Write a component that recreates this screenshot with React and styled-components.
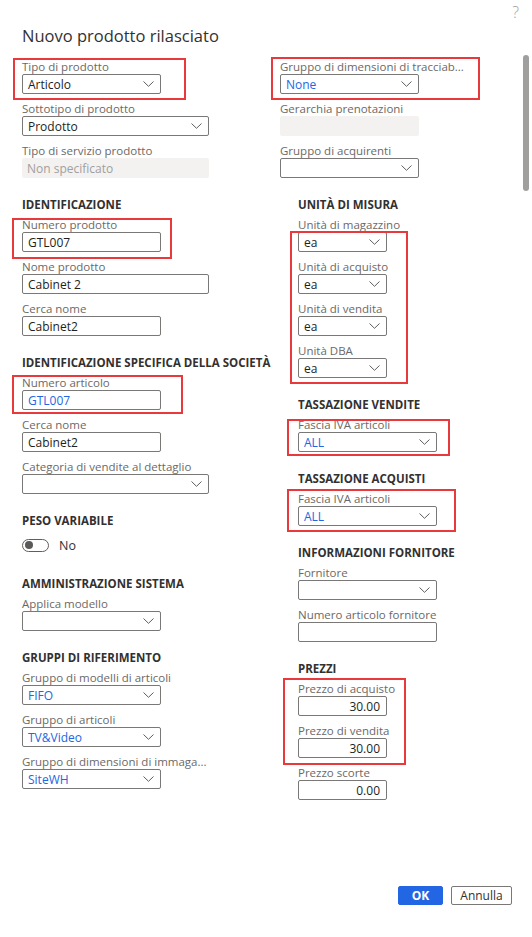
import React from 'react';
import styled, { createGlobalStyle } from 'styled-components';

const GlobalStyle = createGlobalStyle`
  html, body {
    margin: 0;
    padding: 0;
    background: #ffffff;
  }
  body {
    font-family: "Open Sans", "Noto Sans", sans-serif;
    color: #201f1e;
  }
`;

const Dialog = styled.div`
  position: relative;
  width: 532px;
  height: 937px;
  box-sizing: border-box;
  padding: 0 0 0 22px;
  overflow: hidden;
`;

const TopBar = styled.div`
  display: flex;
  justify-content: flex-end;
  height: 24px;
  padding-right: 13px;
`;

const Help = styled.span`
  font-size: 16px;
  line-height: 24px;
  color: #a19f9d;
  font-weight: 300;
`;

const Title = styled.h1`
  margin: 2px 0 14px;
  font-size: 16.5px;
  line-height: 20px;
  font-weight: 400;
  color: #323130;
`;

const Scrollbar = styled.div`
  position: absolute;
  right: 3px;
  top: 55px;
  width: 6px;
  height: 136px;
  border-radius: 3px;
  background: #a19f9d;
`;

const Columns = styled.div`
  display: grid;
  grid-template-columns: 258px 1fr;
  align-items: start;
`;

const Column = styled.div`
  display: flex;
  flex-direction: column;
  align-items: flex-start;
`;

const Section = styled.section`
  display: flex;
  flex-direction: column;
  align-items: flex-start;
  margin-top: ${p => p.$top ?? 11}px;
  padding-left: ${p => p.$indent || 0}px;
`;

const Heading = styled.h2`
  margin: 0 0 6px;
  font-size: 11.5px;
  line-height: 15px;
  font-weight: 700;
  color: #323130;
  white-space: nowrap;
`;

const FieldWrap = styled.div`
  display: flex;
  flex-direction: column;
  width: ${p => p.$w}px;
  margin-bottom: 8px;
`;

const Label = styled.span`
  font-size: 11.5px;
  line-height: 14px;
  color: #6b6967;
  white-space: nowrap;
`;

const Box = styled.div`
  display: flex;
  align-items: center;
  justify-content: ${p => (p.$right ? 'flex-end' : 'space-between')};
  box-sizing: border-box;
  height: 20px;
  padding: 0 6px 0 5px;
  border: ${p => (p.$disabled ? 'none' : '1px solid #7a7876')};
  border-radius: 2px;
  background: ${p => (p.$disabled ? '#f3f2f1' : '#ffffff')};
  font-size: 12px;
  color: ${p => (p.$disabled ? '#a19f9d' : p.$blue ? '#2266e3' : '#201f1e')};
  white-space: nowrap;
`;

const Highlight = styled.div`
  position: relative;
  display: flex;
  flex-direction: column;
  align-items: flex-start;

  &::after {
    content: '';
    position: absolute;
    top: ${p => p.$in[0]}px;
    right: ${p => p.$in[1]}px;
    bottom: ${p => p.$in[2]}px;
    left: ${p => p.$in[3]}px;
    border: 2px solid #e8393c;
    pointer-events: none;
  }
`;

const ToggleRow = styled.div`
  display: flex;
  align-items: center;
  gap: 10px;
  height: 22px;
  margin-bottom: 9px;
  font-size: 12.5px;
  color: #323130;
`;

const Track = styled.span`
  display: flex;
  align-items: center;
  box-sizing: border-box;
  width: 27px;
  height: 13px;
  padding: 0 2px;
  border: 1px solid #605e5c;
  border-radius: 7px;
`;

const Thumb = styled.span`
  width: 8px;
  height: 8px;
  border-radius: 50%;
  background: #5c5a58;
`;

const Footer = styled.div`
  display: flex;
  justify-content: flex-end;
  gap: 8px;
  margin-top: 78px;
  padding-right: 20px;
`;

const Button = styled.button`
  box-sizing: border-box;
  height: 19px;
  padding: 0;
  width: ${p => p.$w}px;
  border-radius: 2px;
  font-family: inherit;
  font-size: 12px;
  line-height: 17px;
  font-weight: ${p => (p.$primary ? 700 : 400)};
  color: ${p => (p.$primary ? '#ffffff' : '#323130')};
  background: ${p => (p.$primary ? '#2266e3' : '#ffffff')};
  border: 1px solid ${p => (p.$primary ? '#2266e3' : '#7a7876')};
`;

const Chevron = () => (
  <svg width="11" height="6" viewBox="0 0 11 6" fill="none">
    <polyline points="0.5,0.5 5.5,5.3 10.5,0.5" stroke="#605e5c" strokeWidth="1" />
  </svg>
);

const Select = ({ label, w, value, blue }) => (
  <FieldWrap $w={w}>
    <Label>{label}</Label>
    <Box $blue={blue}>
      <span>{value}</span>
      <Chevron />
    </Box>
  </FieldWrap>
);

const Input = ({ label, w, value, blue, right, disabled }) => (
  <FieldWrap $w={w}>
    <Label>{label}</Label>
    <Box $blue={blue} $right={right} $disabled={disabled}>
      {value}
    </Box>
  </FieldWrap>
);

export default function App() {
  return (
    <>
      <GlobalStyle />
      <Dialog>
        <TopBar>
          <Help>?</Help>
        </TopBar>
        <Title>Nuovo prodotto rilasciato</Title>
        <Scrollbar />

        <Columns>
          <Column>
            <Highlight $in={[-2, -25, 2, -9]}>
              <Select label="Tipo di prodotto" w={139} value="Articolo" />
            </Highlight>
            <Select label="Sottotipo di prodotto" w={187} value="Prodotto" />
            <Input label="Tipo di servizio prodotto" w={187} value="Non specificato" disabled />

            <Section>
              <Heading>IDENTIFICAZIONE</Heading>
              <Highlight $in={[0, -11, 1, -10]}>
                <Input label="Numero prodotto" w={139} value="GTL007" />
              </Highlight>
              <Input label="Nome prodotto" w={187} value="Cabinet 2" />
              <Input label="Cerca nome" w={139} value="Cabinet2" />
            </Section>

            <Section>
              <Heading>IDENTIFICAZIONE SPECIFICA DELLA SOCIETÀ</Heading>
              <Highlight $in={[-1, -22, 4, -10]}>
                <Input label="Numero articolo" w={139} value="GTL007" blue />
              </Highlight>
              <Input label="Cerca nome" w={139} value="Cabinet2" />
              <Select label="Categoria di vendite al dettaglio" w={187} value="" />
            </Section>

            <Section>
              <Heading>PESO VARIABILE</Heading>
              <ToggleRow>
                <Track>
                  <Thumb />
                </Track>
                No
              </ToggleRow>
            </Section>

            <Section>
              <Heading>AMMINISTRAZIONE SISTEMA</Heading>
              <Select label="Applica modello" w={139} value="" />
            </Section>

            <Section>
              <Heading>GRUPPI DI RIFERIMENTO</Heading>
              <Select label="Gruppo di modelli di articoli" w={139} value="FIFO" blue />
              <Select label="Gruppo di articoli" w={139} value="TV&Video" blue />
              <Select label="Gruppo di dimensioni di immaga..." w={139} value="SiteWH" blue />
            </Section>
          </Column>

          <Column>
            <Highlight $in={[-3, -61, 2, -9]}>
              <Select label="Gruppo di dimensioni di tracciab..." w={139} value="None" blue />
            </Highlight>
            <Input label="Gerarchia prenotazioni" w={139} value="" disabled />
            <Select label="Gruppo di acquirenti" w={139} value="" />

            <Section $indent={18}>
              <Heading>UNITÀ DI MISURA</Heading>
              <Highlight $in={[13, -21, 2, -8]}>
                <Select label="Unità di magazzino" w={89} value="ea" />
                <Select label="Unità di acquisto" w={89} value="ea" />
                <Select label="Unità di vendita" w={89} value="ea" />
                <Select label="Unità DBA" w={89} value="ea" />
              </Highlight>
            </Section>

            <Section $indent={18}>
              <Heading>TASSAZIONE VENDITE</Heading>
              <Highlight $in={[1, -13, 4, -11]}>
                <Select label="Fascia IVA articoli" w={139} value="ALL" blue />
              </Highlight>
            </Section>

            <Section $indent={18}>
              <Heading>TASSAZIONE ACQUISTI</Heading>
              <Highlight $in={[-3, -19, 2, -11]}>
                <Select label="Fascia IVA articoli" w={139} value="ALL" blue />
              </Highlight>
            </Section>

            <Section $indent={18}>
              <Heading>INFORMAZIONI FORNITORE</Heading>
              <Select label="Fornitore" w={139} value="" />
              <Input label="Numero articolo fornitore" w={139} value="" />
            </Section>

            <Section $indent={18}>
              <Heading>PREZZI</Heading>
              <Highlight $in={[-4, -19, 1, -15]}>
                <Input label="Prezzo di acquisto" w={89} value="30.00" right />
                <Input label="Prezzo di vendita" w={89} value="30.00" right />
              </Highlight>
              <Input label="Prezzo scorte" w={89} value="0.00" right />
            </Section>
          </Column>
        </Columns>

        <Footer>
          <Button $primary $w={45}>OK</Button>
          <Button $w={61}>Annulla</Button>
        </Footer>
      </Dialog>
    </>
  );
}
